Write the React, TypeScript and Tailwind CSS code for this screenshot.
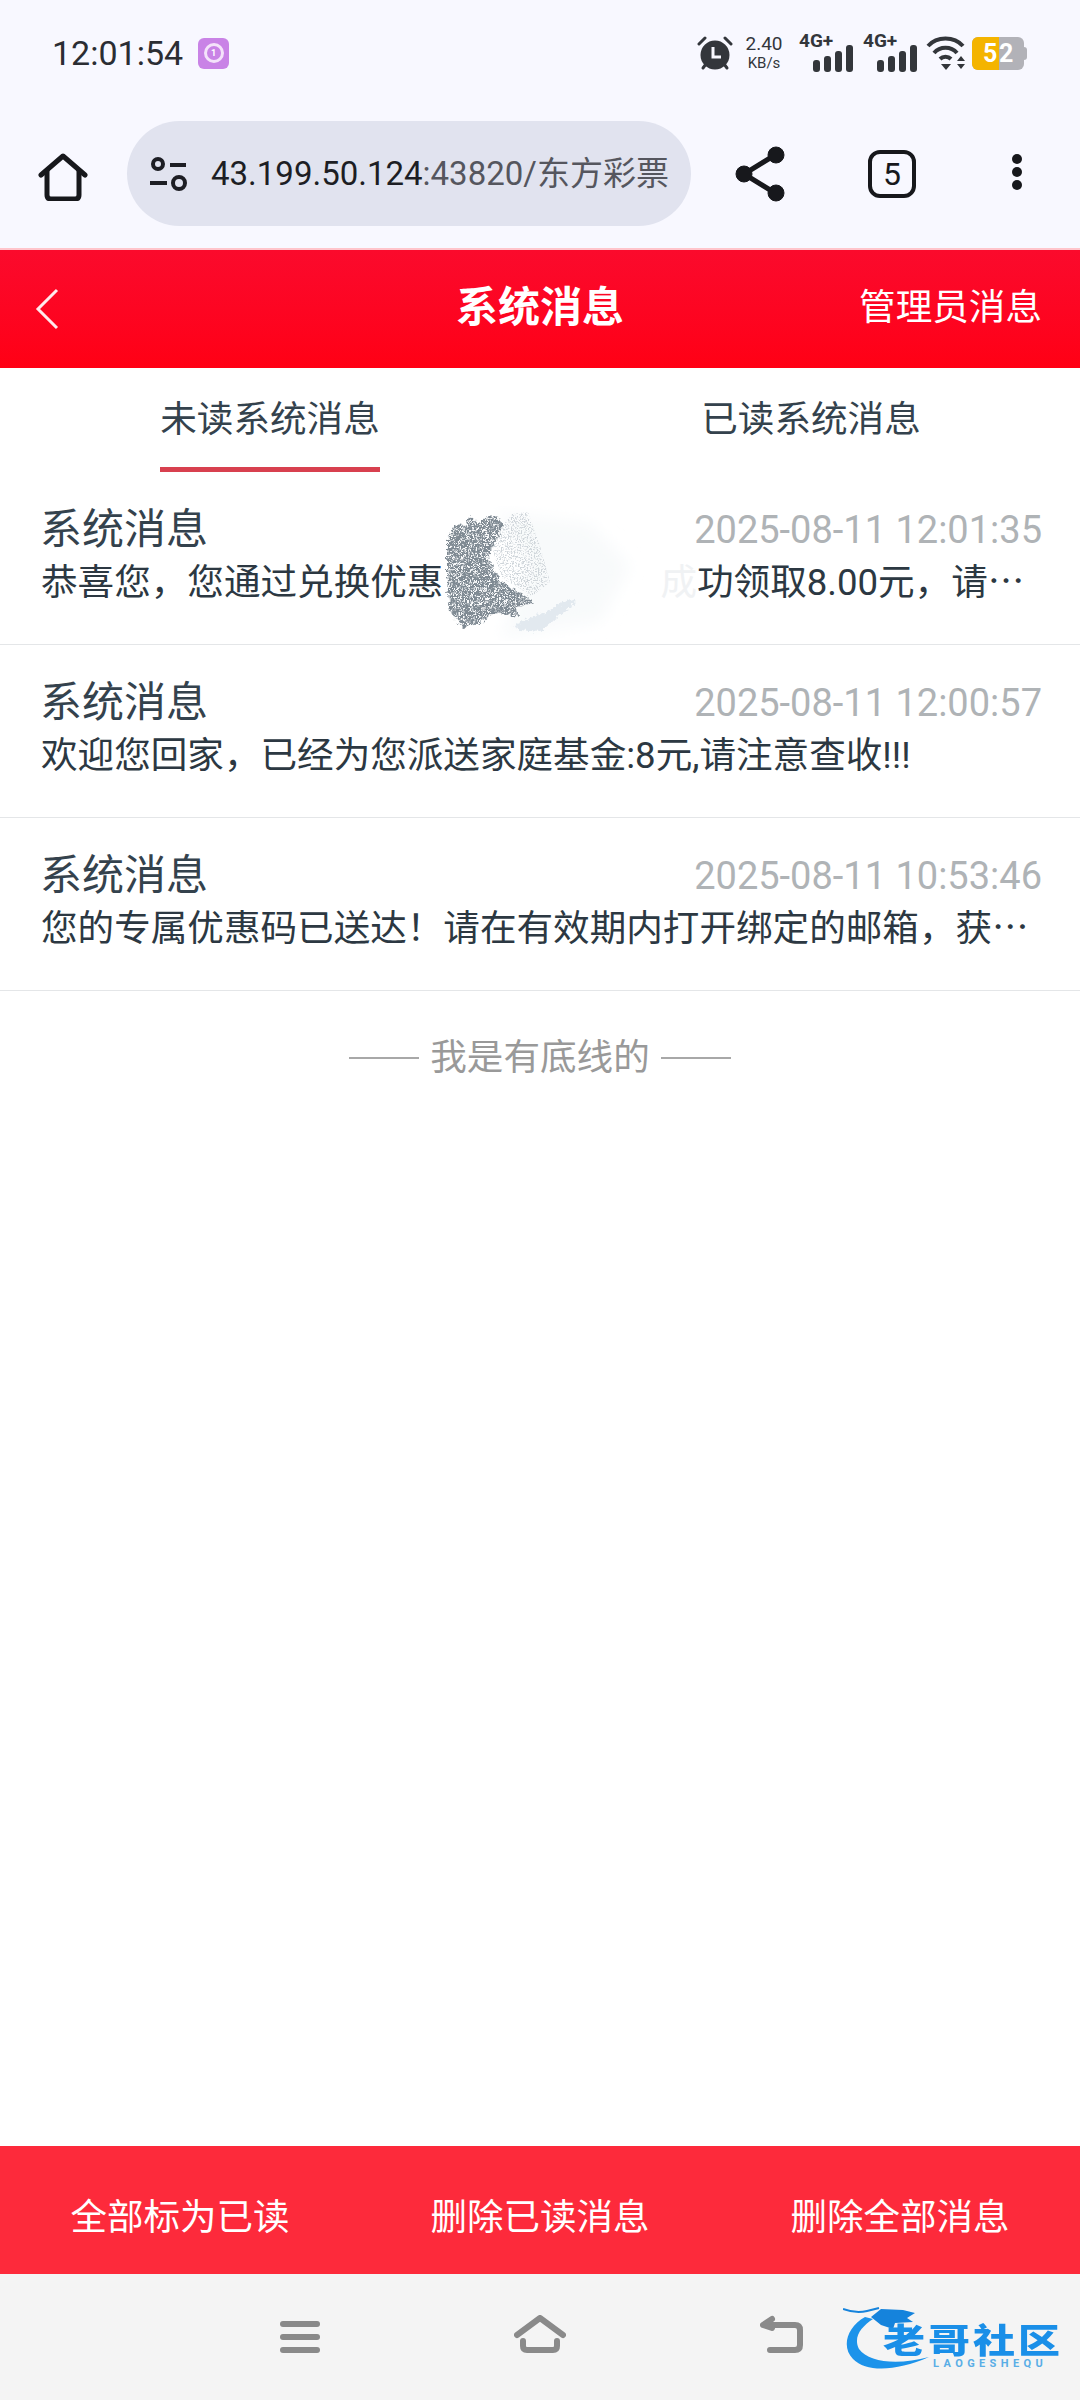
const messages = [
  { time: '2025-08-11 12:01:35', text: null },
  { time: '2025-08-11 12:00:57', text: '欢迎您回家，已经为您派送家庭基金:8元,请注意查收!!!' },
  { time: '2025-08-11 10:53:46', text: '您的专属优惠码已送达！请在有效期内打开绑定的邮箱，获⋯' },
];

const SignalBars = () => (
  <svg width="40" height="27" viewBox="0 0 40 27" fill="#33363b">
    <rect x="0" y="15" width="7" height="12" rx="3" />
    <rect x="11" y="11" width="7" height="16" rx="3" />
    <rect x="22" y="6" width="7" height="21" rx="3" />
    <rect x="33" y="0" width="7" height="27" rx="3" />
  </svg>
);

const NetworkSignal = () => (
  <div className="relative flex h-[38px] w-[54px] justify-end items-end">
    <span className="absolute -top-[3px] left-0 text-[19px] leading-[20px] font-bold text-[#33363b]">4G+</span>
    <SignalBars />
  </div>
);

const StatusBar = () => (
  <div className="flex h-[121px] items-start justify-between pt-[33px] pl-[52px] pr-[53px]">
    <div className="flex items-center gap-[15px]">
      <span className="text-[34px] leading-[40px] text-[#2b2d33]">12:01:54</span>
      <div className="flex h-[31px] w-[31px] items-center justify-center rounded-[6px] bg-[#c983e6]">
        <div className="flex h-[20px] w-[20px] items-center justify-center rounded-full border-[3px] border-[#f4e3fa] text-[9px] leading-none font-bold text-white">
          1
        </div>
      </div>
    </div>
    <div className="flex items-center pt-[1px]">
      <svg width="36" height="36" viewBox="0 0 36 36" fill="#33363b">
        <circle cx="18" cy="20" r="14.5" />
        <path d="M2 9 L8 3 M34 9 L28 3" stroke="#33363b" strokeWidth="3" strokeLinecap="round" />
        <path d="M6 33 L9 29 M30 33 L27 29" stroke="#33363b" strokeWidth="3" strokeLinecap="round" />
        <path d="M16 12 V22 H24" stroke="#f8f8ff" strokeWidth="3" fill="none" />
      </svg>
      <div className="ml-[11px] flex w-[40px] flex-col items-center text-[#33363b]">
        <span className="text-[19px] leading-[20px]">2.40</span>
        <span className="text-[15px] leading-[18px]">KB/s</span>
      </div>
      <div className="ml-[15px] flex gap-[10px]">
        <NetworkSignal />
        <NetworkSignal />
      </div>
      <svg className="ml-[9px]" width="40" height="36" viewBox="0 0 40 36" fill="none" stroke="#33363b" strokeWidth="4">
        <path d="M2 11 C11 1 28 1 37 11" />
        <path d="M8 18 C14 11 25 11 31 18" />
        <path d="M14 24 C17 21 22 21 25 24" />
        <path d="M15 29 H25 L20 35 Z" fill="#33363b" stroke="none" />
        <path d="M31 26 L35 21 L39 26 Z M31 29 H39 L35 34 Z" fill="#33363b" stroke="none" />
      </svg>
      <div className="ml-[6px] flex items-center">
        <div className="flex h-[33px] w-[52px] overflow-hidden rounded-[6px] bg-[#b2b2b8] text-[25px] leading-[33px] font-bold text-white">
          <span className="w-[27px] bg-[#f4b400] pl-[11px]">5</span>
          <span>2</span>
        </div>
        <div className="h-[13px] w-[3px] rounded-r bg-[#b2b2b8]" />
      </div>
    </div>
  </div>
);

const BrowserBar = () => (
  <div className="flex h-[127px] items-start">
    <svg className="ml-[38px] mt-[32px]" width="50" height="48" viewBox="0 0 50 48" fill="none" stroke="#17181c" strokeWidth="5" strokeLinecap="round" strokeLinejoin="round">
      <path d="M3 22 L25 3 L47 22" />
      <path d="M9 18 V42 Q9 46 13 46 H37 Q41 46 41 42 V18" />
    </svg>
    <div className="ml-[39px] flex h-[105px] w-[564px] items-center rounded-full bg-[#e1e3ef] pl-[22px]">
      <svg width="38" height="34" viewBox="0 0 38 34" fill="none" stroke="#1d1e24" strokeWidth="4">
        <circle cx="9" cy="7" r="5" />
        <path d="M21 8 H37" />
        <path d="M1 26 H18" />
        <circle cx="30" cy="26" r="6" />
      </svg>
      <div className="ml-[24px] text-[33px] leading-[40px] whitespace-nowrap text-[#1d1e24]">
        43.199.50.124<span className="text-[#55565e]">:43820/东方彩票</span>
      </div>
    </div>
    <svg className="ml-[44px] mt-[25px]" width="50" height="56" viewBox="0 0 50 56" fill="#17181c" stroke="#17181c">
      <path d="M40 9 L9 28 L40 47" fill="none" strokeWidth="5" />
      <circle cx="9" cy="28" r="8" />
      <circle cx="41" cy="9" r="8" />
      <circle cx="41" cy="47" r="8" />
    </svg>
    <div className="ml-[83px] mt-[29px] flex h-[48px] w-[48px] items-center justify-center rounded-[12px] border-[4px] border-[#17181c] text-[32px] leading-none text-[#17181c]">
      5
    </div>
    <div className="ml-[96px] mt-[33px] flex flex-col gap-[3px]">
      <div className="h-[10px] w-[10px] rounded-full bg-[#17181c]" />
      <div className="h-[10px] w-[10px] rounded-full bg-[#17181c]" />
      <div className="h-[10px] w-[10px] rounded-full bg-[#17181c]" />
    </div>
  </div>
);

const SCRIBBLE =
  'M7 34 L17 17 L24 20 L30 9 L38 18 L46 12 L57 9 L64 20 L58 32 L47 51 L60 74 L87 91 L93 97 L77 101 L78 111 L53 107 L40 117 L23 121 L10 107 L7 74 Z';

// redaction scribble sitting over the first message
const Smudge = () => (
  <svg className="absolute left-[440px] top-[34px]" width="260" height="135" viewBox="0 0 260 135">
    <defs>
      <filter id="grain" x="0" y="0" width="100%" height="100%">
        <feTurbulence type="fractalNoise" baseFrequency="0.7" numOctaves="2" seed="4" result="noise" />
        <feColorMatrix in="noise" type="matrix" values="0 0 0 0 0  0 0 0 0 0  0 0 0 0 0  0 0 0 6 -2.9" result="mask" />
        <feComposite in="SourceGraphic" in2="mask" operator="in" />
      </filter>
      <filter id="rough" x="-10%" y="-10%" width="120%" height="120%">
        <feTurbulence type="fractalNoise" baseFrequency="0.25" numOctaves="2" seed="7" />
        <feDisplacementMap in="SourceGraphic" scale="8" xChannelSelector="R" yChannelSelector="G" />
      </filter>
      <filter id="haze">
        <feGaussianBlur stdDeviation="8" />
      </filter>
    </defs>
    <path d="M55 6 L150 18 L190 60 L160 115 L60 132 L90 60 Z" fill="#f8fafb" filter="url(#haze)" />
    <path d="M50 36 L72 8 L88 6 L100 40 L110 76 L92 90 L62 72 Z" fill="#cfd5da" filter="url(#grain)" />
    <path d="M75 118 L110 104 L130 92 L136 96 L100 126 L78 124 Z" fill="#e2e9ef" filter="url(#rough)" />
    <g filter="url(#rough)">
      <path d={SCRIBBLE} fill="#7f8a93" />
      <path d={SCRIBBLE} fill="#f8f9fa" filter="url(#grain)" />
    </g>
  </svg>
);

const LaogeLogo = () => (
  <div className="absolute left-[843px] top-[31px] h-[68px] w-[222px]">
    <svg className="absolute left-0 top-0" width="100" height="68" viewBox="0 0 100 68">
      <path d="M22 12 C4 22 -2 42 10 54 C24 68 54 66 86 52 C56 60 26 58 16 44 C10 32 18 22 30 14 Z" fill="#1c93ea" />
      <path d="M28 12 L38 4 L60 5 L72 8 L64 13 L70 17 L52 18 L50 24 L38 20 Z" fill="#1583dc" />
      <path d="M0 4 C8 7 16 8 24 6 L36 3" fill="none" stroke="#1583dc" strokeWidth="2" />
    </svg>
    <div className="absolute left-[40px] top-[22px] origin-center scale-y-[0.8] text-[42px] leading-[30px] font-black tracking-[3px] whitespace-nowrap text-[#1a8fe8]">
      老哥社区
    </div>
    <div className="absolute left-[90px] top-[52px] text-[11px] leading-[14px] font-bold tracking-[4.4px] text-[#5aaee6]">
      LAOGESHEQU
    </div>
  </div>
);

const NavBar = () => (
  <div className="relative flex h-[126px] items-start justify-center bg-[#f4f4f4] pt-[41px] pl-[3px]">
    <div className="mr-[194px] mt-[6px] flex w-[40px] flex-col gap-[7px]">
      <div className="h-[6px] rounded-full bg-[#8a8a8a]" />
      <div className="h-[6px] rounded-full bg-[#8a8a8a]" />
      <div className="h-[6px] rounded-full bg-[#8a8a8a]" />
    </div>
    <svg width="52" height="38" viewBox="0 0 52 38" fill="none" stroke="#8a8a8a" strokeWidth="6" strokeLinecap="round" strokeLinejoin="round">
      <path d="M3 20 L26 3 L49 20" />
      <path d="M9 26 V31 Q9 35 13 35 H39 Q43 35 43 31 V26" />
    </svg>
    <svg className="ml-[194px]" width="44" height="38" viewBox="0 0 44 38" fill="none" stroke="#8a8a8a" strokeWidth="6" strokeLinecap="round" strokeLinejoin="round">
      <path d="M5 10 H35 Q40 10 40 15 V30 Q40 35 35 35 H10" />
      <path d="M12 4 L3 10 L12 13" />
    </svg>
    <LaogeLogo />
  </div>
);

export default function App() {
  return (
    <div className="flex h-screen flex-col bg-white font-['Roboto','Noto_Sans_CJK_SC',sans-serif]">
      <div className="bg-[#f8f8ff]">
        <StatusBar />
        <BrowserBar />
      </div>

      <div className="grid h-[120px] grid-cols-[1fr_auto_1fr] items-center border-t-2 border-[#ffc4cb] bg-gradient-to-b from-[#fb0a2c] to-[#ff0014] text-white">
        <svg className="ml-[34px]" width="26" height="42" viewBox="0 0 26 42" fill="none" stroke="#ffe9ec" strokeWidth="3">
          <path d="M23 2 L4 21 L23 40" />
        </svg>
        <div className="pb-[2px] text-[42px] leading-[50px] font-bold">系统消息</div>
        <div className="pb-[2px] pr-[38px] text-right text-[36.6px] leading-[50px]">管理员消息</div>
      </div>

      <div className="grid h-[104px] grid-cols-2 text-[36.6px] leading-[50px] text-[#34424d]">
        <div className="flex justify-center">
          <div className="h-[104px] w-[220px] border-b-[5px] border-[#d8404f] pt-[27px] text-center">未读系统消息</div>
        </div>
        <div className="pt-[27px] pl-[2px] text-center">已读系统消息</div>
      </div>

      {messages.map((item, idx) => (
        <div key={item.time} className="relative h-[173px] border-b border-[#e4e6e8] pl-[41px] pr-[38px] pt-[33px]">
          <div className="flex justify-between">
            <span className="-ml-[1px] text-[42px] leading-[50px] text-[#34424d]">系统消息</span>
            <span className="text-[38px] leading-[50px] text-[#afb3b6]">{item.time}</span>
          </div>
          <div className="mt-[3px] text-[36.6px] leading-[50px] whitespace-nowrap text-[#2c3842]">
            {item.text ?? (
              <>
                恭喜您，您通过兑换优惠
                <span className="inline-block w-[217px]" />
                <span className="text-[#f0f2f4]">成</span>功领取8.00元，请⋯
              </>
            )}
          </div>
          {idx === 0 && <Smudge />}
        </div>
      ))}

      <div className="mt-[42px] flex items-center justify-center gap-[11px] text-[36.6px] leading-[50px] text-[#999999]">
        <div className="h-[2px] w-[70px] bg-[#a8a8a8]" />
        <span>我是有底线的</span>
        <div className="h-[2px] w-[70px] bg-[#a8a8a8]" />
      </div>

      <div className="flex-1" />

      <div className="grid h-[128px] grid-cols-3 items-center bg-[#fd2a3b] pt-[15px] text-center text-[36.5px] leading-[50px] text-white">
        <span>全部标为已读</span>
        <span>删除已读消息</span>
        <span>删除全部消息</span>
      </div>
      <NavBar />
    </div>
  );
}
